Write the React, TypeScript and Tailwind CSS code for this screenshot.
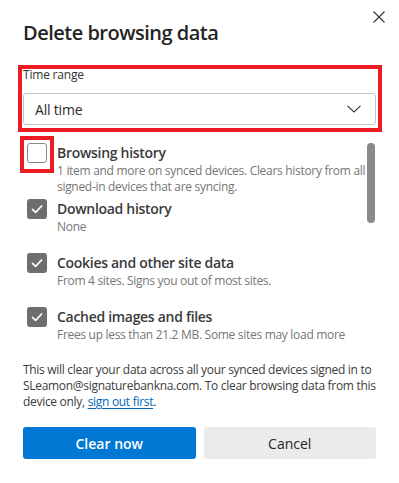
import React from "react";

const font = { fontFamily: '"Open Sans", "Noto Sans", sans-serif' };

function Check({ checked }: { checked: boolean }) {
  if (!checked) {
    return <div className="w-[20px] h-[20px] shrink-0 rounded-[3px] border border-[#8a8a8a] bg-white" />;
  }
  return (
    <div className="w-[20px] h-[20px] shrink-0 rounded-[3px] bg-[#6e6e6e] flex items-center justify-center">
      <svg width="14" height="14" viewBox="0 0 14 14" fill="none">
        <path d="M2.5 7.3 L5.6 10.3 L11.6 4" stroke="white" strokeWidth="1.7" strokeLinecap="round" strokeLinejoin="round" />
      </svg>
    </div>
  );
}

function Item({ checked, title, lines, h }: { checked: boolean; title: string; lines: string[]; h: string }) {
  return (
    <div className={`flex shrink-0 gap-[10px] pl-[4px] ${h}`}>
      <Check checked={checked} />
      <div className="flex flex-col">
        <div className="text-[14px] leading-[20px] font-semibold text-[#3a3a3a] tracking-[-0.3px] whitespace-nowrap">{title}</div>
        {lines.map((l, i) => (
          <div key={i} className="text-[12px] leading-[16px] text-[#767676] tracking-[-0.3px] whitespace-nowrap">{l}</div>
        ))}
      </div>
    </div>
  );
}

export default function App() {
  return (
    <div className="relative w-[399px] h-[483px] bg-white overflow-hidden" style={font}>
      <button className="absolute top-[11px] right-[14px] w-[12px] h-[12px]" aria-label="Close">
        <svg width="12" height="12" viewBox="0 0 12 12" fill="none">
          <path d="M0.5 0.5 L11.5 11.5 M11.5 0.5 L0.5 11.5" stroke="#333" strokeWidth="1.1" />
        </svg>
      </button>

      <div className="flex flex-col px-[23px] pt-[19px]">
        <h1 className="text-[20px] leading-[28px] font-semibold text-[#242424] tracking-[-0.5px]">Delete browsing data</h1>

        <div className="mt-[20px] text-[12px] leading-[16px] text-[#333] tracking-[-0.2px]">Time range</div>
        <div className="mt-[10px] h-[32px] border border-[#c6c6c6] rounded-[3px] flex items-center justify-between pl-[11px] pr-[14px]">
          <span className="text-[14px] text-[#2b2b2b] tracking-[-0.2px]">All time</span>
          <svg width="14" height="8" viewBox="0 0 14 8" fill="none">
            <path d="M0.5 0.8 L7 7 L13.5 0.8" stroke="#333" strokeWidth="1.1" />
          </svg>
        </div>

        <div className="mt-[18px] h-[203px] overflow-hidden flex">
          <div className="flex-1 flex flex-col">
            <Item
              checked={false}
              title="Browsing history"
              h="h-[56px]"
              lines={["1 item and more on synced devices. Clears history from all", "signed-in devices that are syncing."]}
            />
            <Item checked title="Download history" h="h-[54px]" lines={["None"]} />
            <Item checked title="Cookies and other site data" h="h-[54px]" lines={["From 4 sites. Signs you out of most sites."]} />
            <Item checked title="Cached images and files" h="h-[54px]" lines={["Frees up less than 21.2 MB. Some sites may load more"]} />
          </div>
          <div className="w-[8px] h-[80px] mr-px shrink-0 rounded-full bg-[#8a8a8a]" />
        </div>

        <p className="mt-[16px] text-[12px] leading-[16px] text-[#3b3b3b] tracking-[-0.3px] whitespace-nowrap">
          This will clear your data across all your synced devices signed in to
          <br />
          SLeamon@signaturebankna.com. To clear browsing data from this
          <br />
          device only, <a className="text-[#0067b8] underline underline-offset-2">sign out first</a>.
        </p>

        <div className="mt-[17px] grid grid-cols-2 gap-[8px]">
          <button className="h-[32px] rounded-[3px] bg-[#0078d4] text-white text-[14px] font-semibold">Clear now</button>
          <button className="h-[32px] rounded-[3px] bg-[#ebebeb] text-[#262626] text-[14px]">Cancel</button>
        </div>
      </div>

      <div className="absolute left-[18px] top-[65px] w-[364px] h-[67px] border-[4px] border-[#ed1c24] pointer-events-none" />
      <div className="absolute left-[20px] top-[136px] w-[34px] h-[37px] border-[4px] border-[#ed1c24] pointer-events-none" />
    </div>
  );
}
